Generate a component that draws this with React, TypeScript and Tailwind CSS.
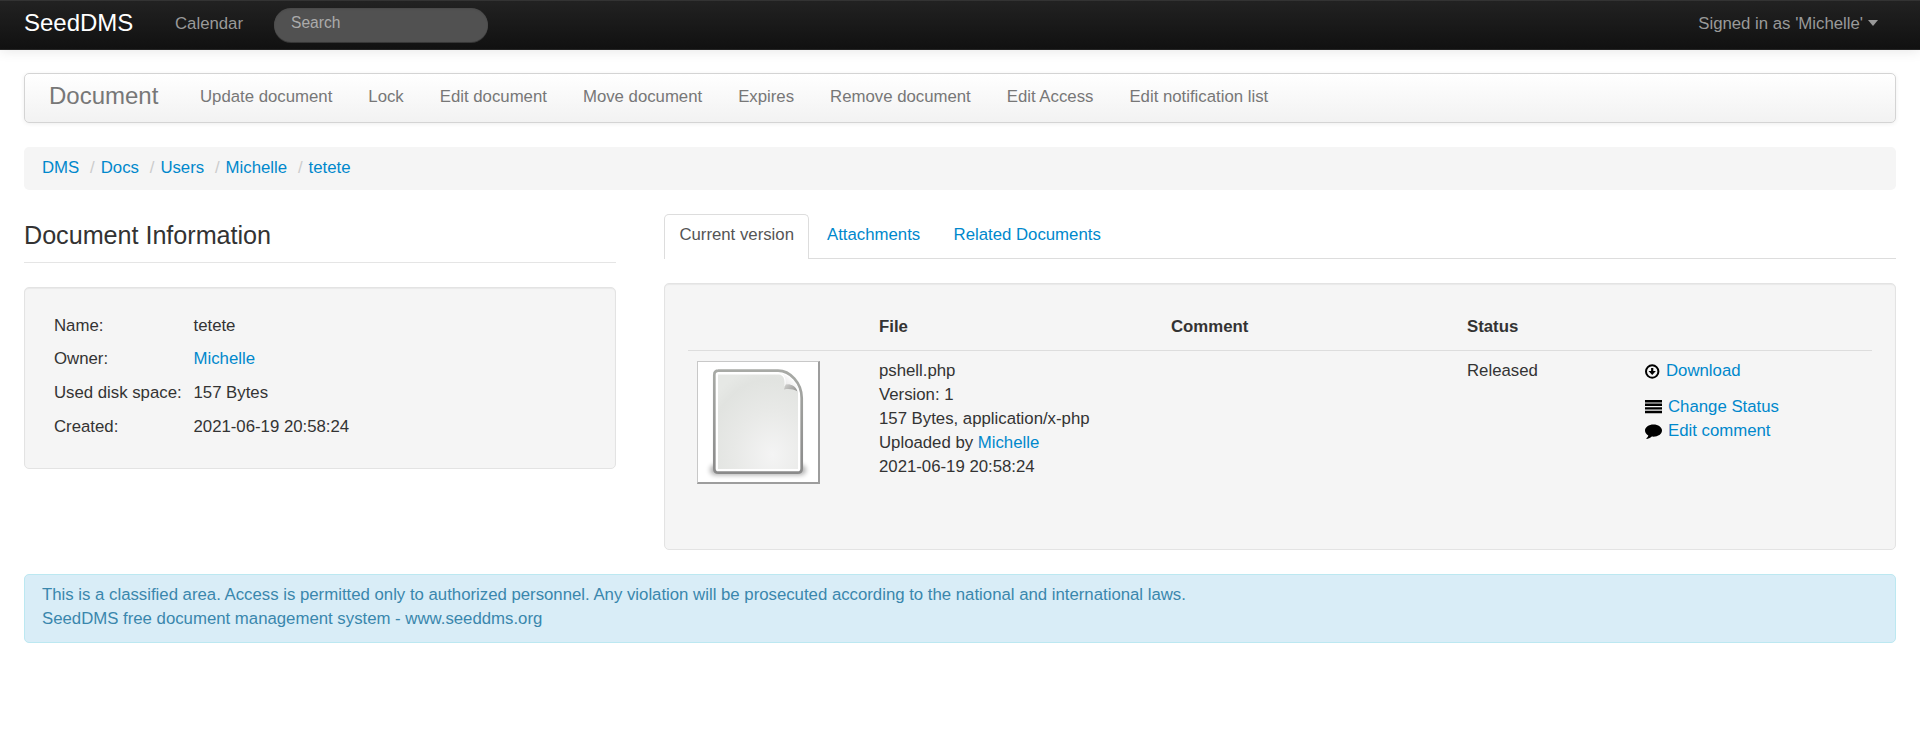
import React from "react";

const link = "text-[#0088cc]";

function FileIcon() {
  return (
    <svg viewBox="0 0 120 120" className="block h-[120px] w-[120px]">
      <defs>
        <radialGradient id="page" cx="0.68" cy="0.85" r="0.95">
          <stop offset="0" stopColor="#f4f4f4" />
          <stop offset="0.5" stopColor="#e8e9e7" />
          <stop offset="0.85" stopColor="#e1e3e0" />
          <stop offset="1" stopColor="#e6e8e5" />
        </radialGradient>
        <linearGradient id="edge" x1="0" y1="0" x2="0" y2="1">
          <stop offset="0" stopColor="#a8aaa6" />
          <stop offset="1" stopColor="#8a8a8a" />
        </linearGradient>
        <linearGradient id="curl" x1="0" y1="1" x2="0.9" y2="0.2">
          <stop offset="0" stopColor="#c4c4c4" />
          <stop offset="0.4" stopColor="#ececec" />
          <stop offset="0.8" stopColor="#ffffff" />
        </linearGradient>
        <linearGradient id="under" x1="0" y1="0" x2="1" y2="0.5">
          <stop offset="0" stopColor="#d2d2d0" />
          <stop offset="1" stopColor="#9c9c9a" />
        </linearGradient>
        <filter id="soft" x="-20%" y="-100%" width="140%" height="300%">
          <feGaussianBlur stdDeviation="2.5" />
        </filter>
      </defs>
      <rect x="12" y="103" width="96" height="10" rx="5" fill="#000" opacity="0.32" filter="url(#soft)" />
      <path
        d="M20 8.700H80C92 8.700 103.700 21 103.700 36V106.500Q103.700 110.700 99.500 110.700H20.500Q16.300 110.700 16.300 106.500V12.900Q16.300 8.700 20.500 8.700Z"
        fill="#fff"
        stroke="url(#edge)"
        strokeWidth="2.7"
      />
      <path d="M20 12.500H81C86 13 87 18 86.500 24C93 23.500 97 26 100 30V107H20Z" fill="url(#page)" />
      <path d="M82 11C87 13 88 17 87.500 22.500C92 21.500 97 23 100.500 27C97 19 91 13 82 11Z" fill="url(#curl)" />
      <path d="M87.500 22.500C92 21.500 98 23.500 99.500 29.500C95 27 91 26.500 86 27.500Z" fill="url(#under)" />
    </svg>
  );
}

function DownloadIcon() {
  return (
    <svg viewBox="0 0 15 15" className="h-[15px] w-[15px]">
      <circle cx="7.200" cy="7.500" r="6.200" fill="none" stroke="#000" strokeWidth="2" />
      <path d="M6.100 4H8.300V7H10.900L7.200 11L3.500 7H6.100Z" fill="#000" />
    </svg>
  );
}

function ListIcon() {
  return (
    <svg viewBox="0 0 17 14" className="h-[14px] w-[17px]">
      <path d="M0 0H17V2.400H0ZM0 3.600H17V6H0ZM0 7.200H17V9.600H0ZM0 10.800H17V13.200H0Z" fill="#000" />
    </svg>
  );
}

function CommentIcon() {
  return (
    <svg viewBox="0 0 17 15" className="h-[15px] w-[17px]">
      <path
        d="M8.500 0.500C3.800 0.500 0 3.200 0 6.600C0 8.700 1.300 10.400 3.300 11.500C3 13 2 13.800 1.500 14.300C1.200 14.600 1.400 15 1.900 14.900C4 14.500 5.700 13.600 6.800 12.600C12.200 13.200 17 10.600 17 6.600C17 3.200 13.200 0.500 8.500 0.500Z"
        fill="#000"
      />
    </svg>
  );
}

const actions = [
  "Update document",
  "Lock",
  "Edit document",
  "Move document",
  "Expires",
  "Remove document",
  "Edit Access",
  "Edit notification list",
];
const crumbs = ["DMS", "Docs", "Users", "Michelle", "tetete"];
const info = [
  ["Name:", "tetete"],
  ["Owner:", "Michelle"],
  ["Used disk space:", "157 Bytes"],
  ["Created:", "2021-06-19 20:58:24"],
];

const well =
  "rounded-[5px] border border-[#e3e3e3] bg-[#f5f5f5] shadow-[inset_0_1px_1px_rgba(0,0,0,0.05)]";

export default function App() {
  return (
    <div className="h-[741px] w-full overflow-hidden bg-white font-['Liberation_Sans',Arial,sans-serif] text-[16.8px] leading-6 tracking-[-0.01px] text-[#333]">
      <header className="flex h-[50px] items-start border-b border-[#252525] bg-linear-to-b from-[#222] to-[#111] px-6 text-[#999] shadow-[0_1px_12px_rgba(0,0,0,0.1),inset_0_1px_0_#333]">
        <a className="w-[109px] pt-[11px] text-2xl leading-6 text-white">SeedDMS</a>
        <a className="ml-[42px] w-[68px] pt-3">Calendar</a>
        <div className="mt-2 ml-[31px] h-[34px] w-[214px] rounded-full bg-[#515151] px-[17px] pt-[3px] text-[15.6px] text-[#ababab] shadow-[inset_0_1px_2px_rgba(0,0,0,0.1),0_1px_0_rgba(255,255,255,0.15)]">
          Search
        </div>
        <a className="mr-[18px] ml-auto flex pt-3">
          Signed in as 'Michelle'
          <i className="mt-2 ml-[5px] h-0 w-0 border-x-[5px] border-t-[6px] border-x-transparent border-t-[#999]" />
        </a>
      </header>

      <main className="px-6 pt-[23px]">
        <nav className="flex h-[50px] items-start rounded-[5px] border border-[#d4d4d4] bg-linear-to-b from-white to-[#f2f2f2] pl-6 text-[#777] shadow-[0_1px_4px_rgba(0,0,0,0.065)]">
          <a className="w-[133px] pt-[10px] text-2xl leading-6">Document</a>
          {actions.map((a) => (
            <a key={a} className="px-[18px] pt-[11px]">
              {a}
            </a>
          ))}
        </nav>

        <div className="mt-6 flex h-[43px] rounded-[5px] bg-[#f5f5f5] px-[18px] pt-[9px]">
          {crumbs.map((c, i) => (
            <span key={c} className="flex">
              {i > 0 && <span className="pr-[6px] pl-[10.8px] text-[#ccc]">/</span>}
              <a className={link}>{c}</a>
            </span>
          ))}
        </div>

        <div className="mt-6 flex h-[336px] gap-12">
          <section className="w-[592px]">
            <h2 className="h-[49px] border-b border-[#e5e5e5] text-[25.2px] leading-[42px] tracking-[-0.04px]">
              Document Information
            </h2>
            <div className={`mt-6 h-[182px] pt-[20.8px] pl-[29px] ${well}`}>
              {info.map(([k, v]) => (
                <div key={k} className="flex h-[33.6px] pt-[5px]">
                  <span className="w-[139.5px]">{k}</span>
                  <span className={v === "Michelle" ? link : ""}>{v}</span>
                </div>
              ))}
            </div>
          </section>

          <section className="flex-1">
            <div className="flex h-[45px] border-b border-[#ddd]">
              <a className="h-[45px] w-[145px] rounded-t-[5px] border border-b-0 border-[#ddd] bg-white pt-[8px] pl-[14.4px] text-[#555]">
                Current version
              </a>
              <a className={`ml-[18px] pt-[9px] ${link}`}>Attachments</a>
              <a className={`ml-[33.4px] pt-[9px] ${link}`}>Related Documents</a>
            </div>
            <div className={`mt-6 h-[267px] px-[23px] pt-[22px] ${well}`}>
              <div className="grid h-[45px] grid-cols-[191px_292px_296px_178px_1fr] border-b border-[#ddd] pt-[9px] font-bold">
                <span />
                <span>File</span>
                <span>Comment</span>
                <span>Status</span>
              </div>
              <div className="grid grid-cols-[191px_292px_296px_178px_1fr] pt-2">
                <div className="mt-[2px] ml-[9px] h-[123px] w-[123px] border-t border-r-2 border-b-2 border-l border-t-[#c8c8c8] border-r-[#9d9d9d] border-b-[#9d9d9d] border-l-[#c8c8c8] bg-white">
                  <FileIcon />
                </div>
                <div>
                  <div>pshell.php</div>
                  <div>Version: 1</div>
                  <div>157 Bytes, application/x-php</div>
                  <div>
                    Uploaded by <a className={link}>Michelle</a>
                  </div>
                  <div>2021-06-19 20:58:24</div>
                </div>
                <div />
                <div>Released</div>
                <div className={link}>
                  <div className="mb-3 flex h-6 items-center gap-[6px]">
                    <DownloadIcon />
                    <a>Download</a>
                  </div>
                  <div className="flex h-6 items-center gap-[6px]">
                    <ListIcon />
                    <a>Change Status</a>
                  </div>
                  <div className="flex h-6 items-center gap-[6px]">
                    <CommentIcon />
                    <a>Edit comment</a>
                  </div>
                </div>
              </div>
            </div>
          </section>
        </div>

        <footer className="mt-6 h-[69px] rounded-[5px] border border-[#bce8f1] bg-[#d9edf7] px-[17px] pt-[8px] text-[#3a87ad]">
          <div>
            This is a classified area. Access is permitted only to authorized personnel. Any violation will be
            prosecuted according to the national and international laws.
          </div>
          <div>SeedDMS free document management system - www.seeddms.org</div>
        </footer>
      </main>
    </div>
  );
}
